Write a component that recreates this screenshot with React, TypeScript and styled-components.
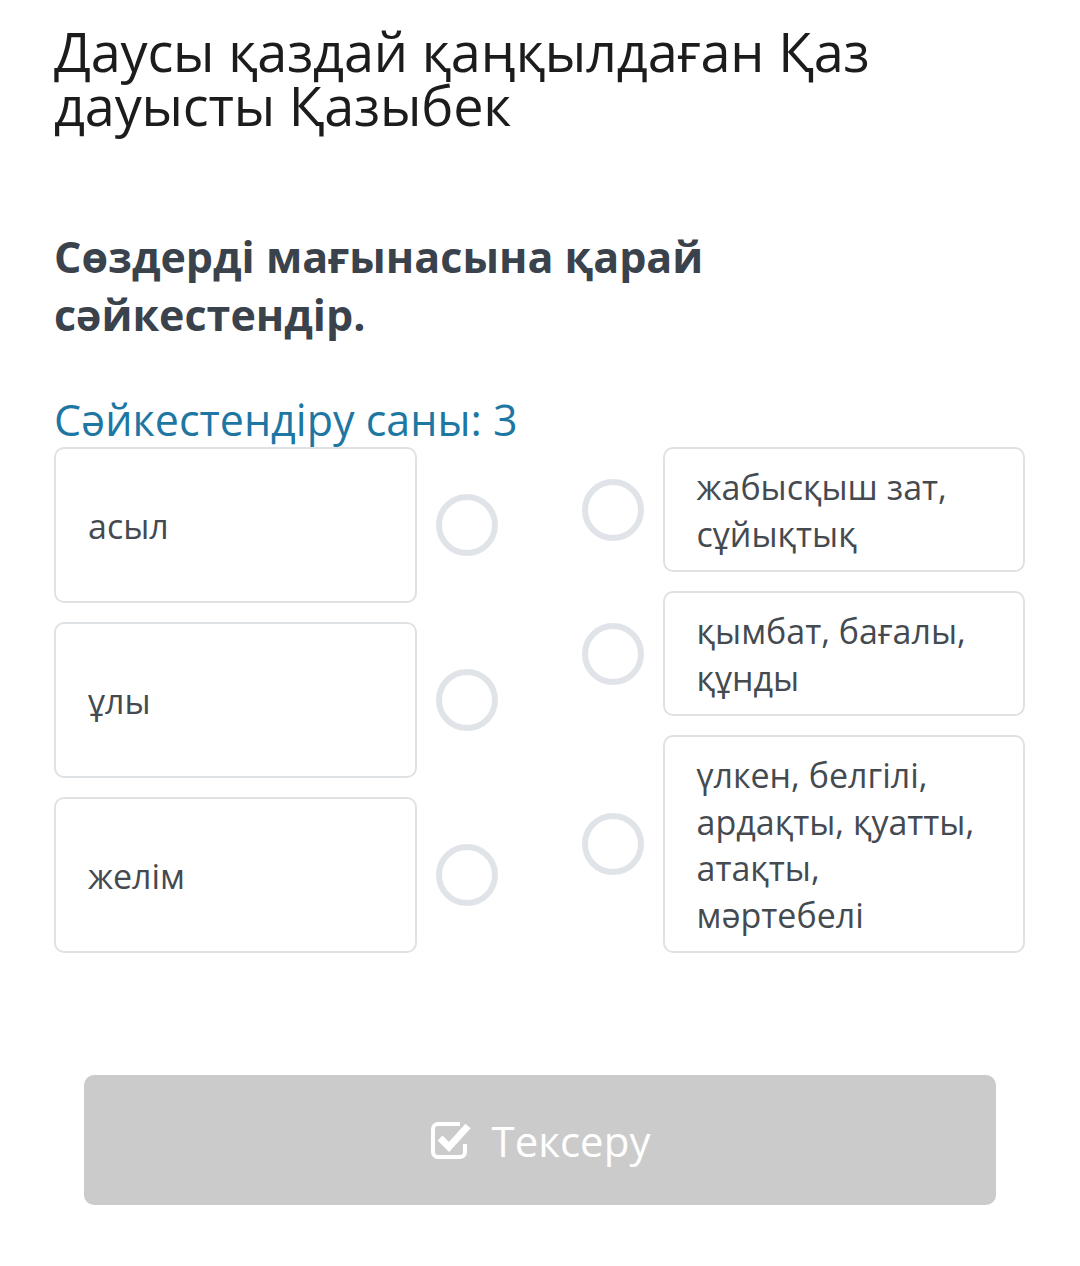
import React from "react";
import styled, { createGlobalStyle } from "styled-components";

const Global = createGlobalStyle`
  html, body { margin: 0; padding: 0; background: #ffffff; }
  body { font-family: "Open Sans", "Noto Sans", sans-serif; }
`;

const Page = styled.div`
  width: 1080px;
  box-sizing: border-box;
  padding: 24px 55px 60px 54px;
`;

const Title = styled.h1`
  margin: 0;
  font-weight: 400;
  font-size: 54px;
  line-height: 54px;
  color: #1c1c1c;
  letter-spacing: -0.2px;
`;

const Question = styled.h2`
  margin: 96px 0 0;
  font-weight: 700;
  font-size: 43px;
  line-height: 58px;
  color: #3a424c;
`;

const Counter = styled.div`
  margin-top: 53px;
  font-size: 43px;
  line-height: 46px;
  color: #1e77a3;
`;

const Board = styled.div`
  margin-top: 4px;
  display: grid;
  grid-template-columns: 1fr 1fr;
  column-gap: 84px;
`;

const Column = styled.div`
  display: flex;
  flex-direction: column;
  gap: 19px;
`;

const Row = styled.div<{ $reverse?: boolean; $grow?: boolean }>`
  display: flex;
  flex-direction: ${(p) => (p.$reverse ? "row-reverse" : "row")};
  align-items: center;
  gap: 19px;
  flex: ${(p) => (p.$grow ? "1 1 0" : "0 0 auto")};
`;

const Card = styled.div<{ $center?: boolean }>`
  flex: 1;
  align-self: stretch;
  box-sizing: border-box;
  border: 2px solid #dfe2e5;
  border-radius: 10px;
  padding: 15px 30px 13px 32px;
  display: flex;
  align-items: ${(p) => (p.$center ? "center" : "flex-start")};
  font-size: 34px;
  line-height: 46.5px;
  color: #444a50;
`;

const Dot = styled.div`
  flex: 0 0 auto;
  width: 62px;
  height: 62px;
  box-sizing: border-box;
  border: 6px solid #e0e4e9;
  border-radius: 50%;
`;

const ButtonWrap = styled.div`
  margin-top: 122px;
  padding: 0 29px 0 30px;
`;

const CheckButton = styled.button`
  width: 100%;
  height: 130px;
  border: none;
  border-radius: 10px;
  background: #cbcbcb;
  color: #ffffff;
  font-family: "Open Sans", "Noto Sans", sans-serif;
  font-size: 42px;
  display: flex;
  align-items: center;
  justify-content: center;
  gap: 20px;
  padding: 0;
`;

const CheckIcon = () => (
  <svg width="42" height="40" viewBox="0 0 42 40" aria-hidden="true">
    <path
      d="M30 4 H8 a5 5 0 0 0 -5 5 V32 a5 5 0 0 0 5 5 H30 a5 5 0 0 0 5 -5 V24"
      fill="none"
      stroke="#ffffff"
      strokeWidth="4"
    />
    <path
      d="M10 18 L19 27 L38 6"
      fill="none"
      stroke="#ffffff"
      strokeWidth="7"
      strokeLinejoin="miter"
    />
  </svg>
);

const left = ["асыл", "ұлы", "желім"];
const right = [
  "жабысқыш зат, сұйықтық",
  "қымбат, бағалы, құнды",
  "үлкен, белгілі, ардақты, қуатты, атақты, мәртебелі",
];

export default function App() {
  return (
    <>
      <Global />
      <Page>
        <Title>
          Даусы қаздай қаңқылдаған Қаз
          <br />
          дауысты Қазыбек
        </Title>
        <Question>
          Сөздерді мағынасына қарай
          <br />
          сәйкестендір.
        </Question>
        <Counter>Сәйкестендіру саны: 3</Counter>
        <Board>
          <Column>
            {left.map((t) => (
              <Row key={t} $grow>
                <Card $center>{t}</Card>
                <Dot />
              </Row>
            ))}
          </Column>
          <Column>
            {right.map((t) => (
              <Row key={t} $reverse>
                <Card>{t}</Card>
                <Dot />
              </Row>
            ))}
          </Column>
        </Board>
        <ButtonWrap>
          <CheckButton>
            <CheckIcon />
            Тексеру
          </CheckButton>
        </ButtonWrap>
      </Page>
    </>
  );
}
